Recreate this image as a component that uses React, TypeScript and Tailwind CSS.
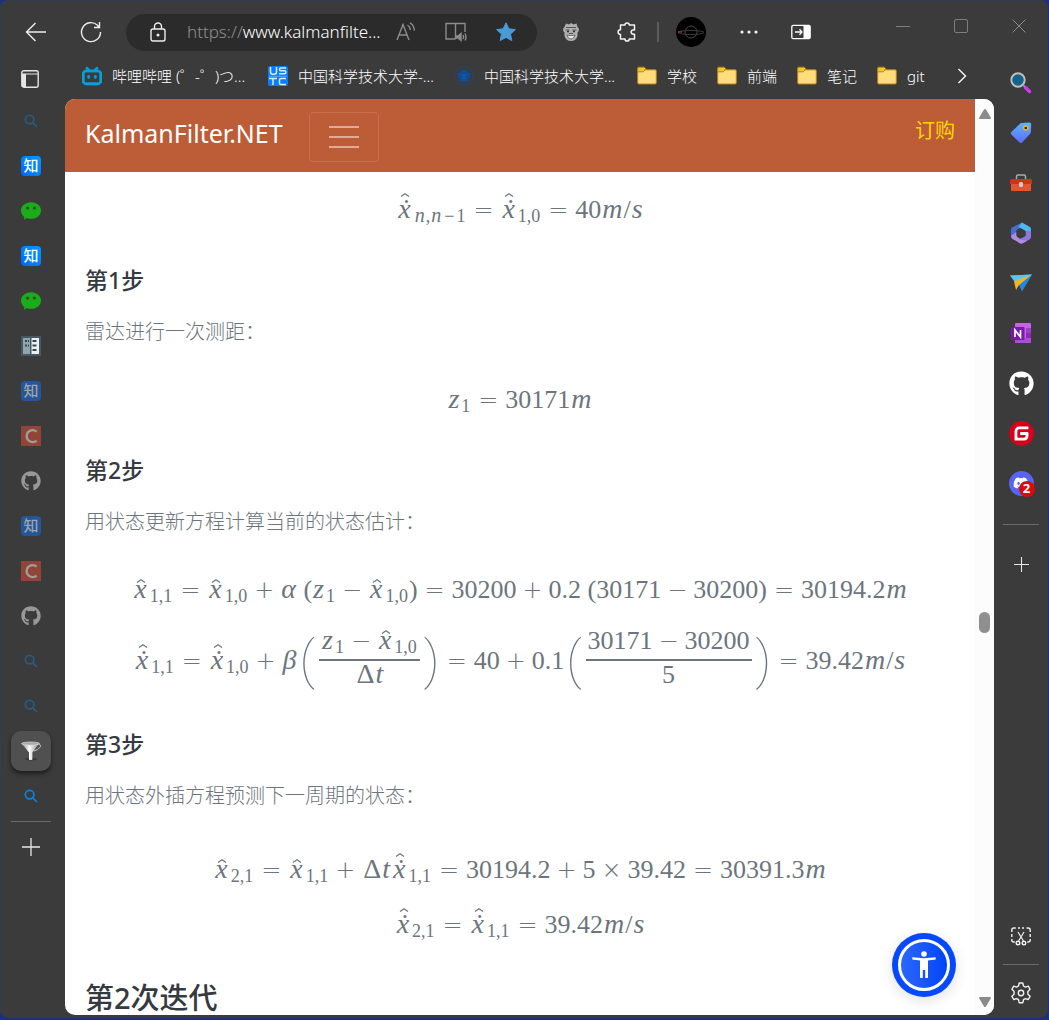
import type { ReactNode } from "react";
import { FaDiscord, FaGithub } from "react-icons/fa";
import { SiBilibili, SiGitee } from "react-icons/si";

/* ---------- Math ---------- */

const Sub = ({ children }: { children: ReactNode }) => (
  <span className="mx-px inline-block align-[-4px] text-[18px] leading-3">{children}</span>
);
const N = () => <i className="mx-px text-[20px]">n</i>;
const Rel = ({ children = "=" }: { children?: ReactNode }) => (
  <span className="mx-[7px] inline-block w-5 text-center font-['DejaVu_Sans'] text-[24px] font-extralight leading-4">{children}</span>
);
const Bin = ({ children }: { children: ReactNode }) => (
  <span className="mx-1.5 inline-block w-5 text-center font-['DejaVu_Sans'] text-[24px] font-extralight leading-4">{children}</span>
);
const It = ({ children }: { children: ReactNode }) => <i className="mx-px text-[28px] leading-4">{children}</i>;
const Hat = ({ className }: { className: string }) => (
  <svg viewBox="0 0 10 4" className={className} fill="none" stroke="currentColor" strokeWidth="1.200">
    <path d="M1 3.500 5 .8l4 2.700" />
  </svg>
);
const X = ({ dot }: { dot?: boolean }) => (
  <span className="relative mx-0.5 inline-block text-[28px] leading-4">
    <i>{dot ? "\u1e8b" : "x"}</i>
    <Hat className={dot ? "absolute -top-2 left-0.5 h-1 w-2.5" : "absolute -top-0.5 left-0.5 h-1 w-2.5"} />
  </span>
);
const Delta = () => <span className="ml-0.5 text-[28px] leading-4">Δ</span>;
const Eq = ({ children }: { children: ReactNode }) => (
  <div className="flex min-h-10 items-center justify-center whitespace-nowrap font-['Liberation_Serif',serif] text-[26px] leading-10 text-[#6c757d]">
    {children}
  </div>
);
const Open = () => <span className="mr-1 ml-0.5 font-['Roboto'] text-[52px] font-thin leading-[60px]">(</span>;
const Close = () => <span className="ml-1 font-['Roboto'] text-[52px] font-thin leading-[60px]">)</span>;
const Frac = ({ top, bottom }: { top: ReactNode; bottom: ReactNode }) => (
  <span className="flex flex-col items-center">
    <span className="h-8 border-b-2 border-[#6c757d] px-0.5 leading-6">{top}</span>
    <span className="h-8 leading-7">{bottom}</span>
  </span>
);

/* ---------- Article text ---------- */

const H3 = ({ children }: { children: ReactNode }) => (
  <h3 className="mt-9 text-[23px] font-medium leading-7 text-[#343a40]">{children}</h3>
);
const P = ({ children }: { children: ReactNode }) => (
  <p className="mt-[23px] mb-[33px] text-xl font-light leading-[30px] text-[#6c757d]">{children}</p>
);

/* ---------- Icons ---------- */

const SearchSmall = ({ dim }: { dim?: boolean }) => (
  <svg viewBox="0 0 14 14" className={dim ? "size-3.5 text-[#275b86]" : "size-3.5 text-[#0f80e0]"} fill="none" stroke="currentColor" strokeWidth="1.7">
    <circle cx="5.6" cy="5.6" r="4.3" />
    <path d="M8.8 8.8 13 13" />
  </svg>
);
const Zhihu = ({ dim }: { dim?: boolean }) => (
  <span
    className={
      dim
        ? "flex size-5 items-center justify-center rounded bg-[#24579a] text-[15px] font-medium leading-none text-[#a0a4ab]"
        : "flex size-5 items-center justify-center rounded bg-linear-to-tr from-[#0062ff] to-[#0a9bff] text-[15px] font-medium leading-none text-white"
    }
  >
    知
  </span>
);
const Wechat = () => (
  <svg viewBox="0 0 20 20" className="size-5">
    <path d="M10 1.200c5.600 0 10 3.600 10 8.300s-4.400 8.300-10 8.300c-1.700 0-3.200-.3-4.600-.9L3 19l.3-3.100C1.300 14.400 0 12.100 0 9.500 0 4.800 4.400 1.200 10 1.200Z" fill="#1aad19" />
    <circle cx="6.600" cy="7" r="1.500" fill="#2e4a2e" />
    <circle cx="13.400" cy="7" r="1.500" fill="#2e4a2e" />
  </svg>
);
const Ledger = () => (
  <svg viewBox="0 0 20 20" className="size-5">
    <path d="M0 0h20v20H0z" fill="#455a64" />
    <path d="M2 2h7v16H2z" fill="#90a4ae" />
    <path d="M10.500 2H18v16h-7.500z" fill="#eceff1" />
    <path d="M4 4h2v2H4zM4 8.500h2v2H4zM7 4h1v2H7zM7 8.500h1v2H7zM11.500 4h4v2h-4zM11.500 8.500h4v2h-4zM11.500 13h4v2h-4z" fill="#37474f" />
  </svg>
);
const CLogo = () => (
  <svg viewBox="0 0 20 20" className="size-5">
    <path d="M0 0h20v20H0z" fill="#924536" />
    <path d="M15.600 5.600A6 6 0 1 0 15.600 14.600" fill="none" stroke="#9d9d9d" strokeWidth="2.400" />
  </svg>
);
const Funnel = () => (
  <svg viewBox="0 0 20 20" className="size-5">
    <defs>
      <linearGradient id="funnel" x1="0" x2="1">
        <stop offset="0" stopColor="#777" />
        <stop offset=".45" stopColor="#fff" />
        <stop offset="1" stopColor="#888" />
      </linearGradient>
    </defs>
    <ellipse cx="10" cy="18" rx="6" ry="1.500" fill="#393939" />
    <path d="M.5 2.500 8 11.500v7q1.700 1 3.400 0v-7L18 2.500Z" fill="url(#funnel)" />
    <ellipse cx="9.500" cy="2.600" rx="9" ry="1.600" fill="#a8a8a8" stroke="#eee" strokeWidth=".6" />
    <path d="M18 3.500c3 0 2 4-5 6.500" fill="none" stroke="#ccc" />
  </svg>
);
const Plus = ({ className }: { className: string }) => (
  <svg viewBox="0 0 18 18" className={className} stroke="#e8e8e8" strokeWidth="1.300">
    <path d="M9 0v18M0 9h18" />
  </svg>
);
const Folder = () => (
  <svg viewBox="0 0 20 20" className="size-5 shrink-0" stroke="#b58413">
    <path d="M.7 3.500v13.300q0 1.200 1.200 1.200h16.200q1.200 0 1.200-1.200V5q0-1.200-1.200-1.200H8.500" fill="#ffdc7c" />
    <path d="M.7 5.200V2.200q0-1 1-1h5.600l1.400 1.500-1.600 2.500q-.5.600-1.200.6H.7Z" fill="#f7c62f" />
  </svg>
);
const Ustc = () => (
  <svg viewBox="0 0 20 20" className="size-5 shrink-0">
    <rect width="20" height="20" rx="2" fill="#0a7dfb" />
    <path d="M2.500 1v5q0 2.200 2.200 2.200h1.600q2.200 0 2.200-2.200V1M18 2h-5q-1.500 0-1.500 1.400t1.500 1.400h3.400q1.500 0 1.500 1.500T16.400 7.800H11M1 12.500h8M5 12.500V19M18 12.500h-5q-1.500 0-1.500 1.500v3q0 1.500 1.500 1.500h5" fill="none" stroke="#d7ecff" strokeWidth="1.500" />
    <path d="M1 10.300h18" stroke="#6fb8ff" strokeWidth=".8" />
  </svg>
);
const Seal = () => (
  <svg viewBox="0 0 20 20" className="size-5 shrink-0" fill="none" stroke="#0b4f9e">
    <circle cx="10" cy="10" r="9.300" strokeOpacity=".8" strokeDasharray="2.500 .6" />
    <circle cx="10" cy="10" r="5.200" fill="#0b4f9e" />
    <path d="m10 4 1.800 3.200 3.700.8-2.500 2.800.5 4-3.500-1.500-3.500 1.500.5-4L4.500 8l3.700-.8Z" fill="#0b4f9e" strokeWidth="1.500" strokeLinejoin="round" />
    <path d="M8 9h4M8.500 12h3" stroke="#2f5f9a" />
  </svg>
);

const LockIcon = () => (
  <svg viewBox="0 0 16 20" className="h-5 w-4 shrink-0" fill="none" stroke="#eee" strokeWidth="1.400">
    <rect x="1" y="7" width="14" height="12" rx="2" />
    <path d="M4.500 7V4.500a3.500 3.500 0 0 1 7 0V7" />
    <circle cx="8" cy="13" r=".8" fill="#eee" />
  </svg>
);

/* ---------- Top toolbar ---------- */

const Toolbar = () => (
  <header className="flex h-[55px] shrink-0 items-start">
    <div className="flex h-[55px] flex-1 items-center pt-[9px]">
      <button aria-label="返回" className="ml-6 flex w-6 justify-center">
        <svg viewBox="0 0 22 20" className="h-5 w-[22px]" fill="none" stroke="#eee" strokeWidth="1.400">
          <path d="M21 10H1.500M10.500 1 1.500 10l9 9" />
        </svg>
      </button>
      <button aria-label="刷新" className="ml-8 flex w-[22px] justify-center">
        <svg viewBox="0 0 22 22" className="size-[22px]" fill="none" stroke="#eee" strokeWidth="1.400">
          <path d="M20.500 11A9.500 9.500 0 1 1 17.500 4.200L19 6M19.500 1v5.500H14" />
        </svg>
      </button>
      <div className="ml-6 flex h-[37px] max-w-[411px] flex-1 items-center rounded-full bg-[#2b2b2b] pl-6">
        <LockIcon />
        <a href="https://www.kalmanfilter.net" className="ml-[21px] flex-1 font-['Noto_Sans'] text-[17px] font-light text-white">
          <span className="text-[#8f8f8f]">https://</span>www.kalmanfilte...
        </a>
        <svg viewBox="0 0 20 20" className="size-5 shrink-0" fill="none" stroke="#8c8c8c" strokeWidth="1.400">
          <path d="M1 18 7 2.500 13 18M3 13h8M11.500 3q2.500 1.500 2.800 5M14 .8q4.300 2.500 4.300 8" />
        </svg>
        <svg viewBox="0 0 22 20" className="ml-[29px] h-5 w-[22px] shrink-0" fill="none" stroke="#8c8c8c" strokeWidth="1.400">
          <path d="M10.500 17V1.500H1V17h9.500M10.500 1.500H20V10M10.500 17" />
          <path d="M11 14h2l3-2.500v7L13 16h-2z" fill="#8c8c8c" />
          <path d="M18 13q1.200 2 0 4M20 11.500q2 3.500 0 7" />
        </svg>
        <svg viewBox="0 0 20 20" className="ml-[29px] mr-[21px] size-5 shrink-0">
          <path d="m10 .8 2.800 6 6.600.8-4.900 4.500 1.300 6.500L10 15.400l-5.800 3.200 1.300-6.500L.6 7.600l6.600-.8Z" fill="#4a9ad6" stroke="#4a9ad6" strokeLinejoin="round" />
        </svg>
      </div>
      <div className="ml-6 flex items-center">
        <svg viewBox="0 0 20 20" className="size-5">
          <path d="M3.500 5 5 1.500l3 1L10 1l2.500 1.500 3-1L16.500 5q2 1 1.300 4l-1.300 1.500v3.500q-1.500 5-6.500 5t-6.500-5v-3.500L2.200 9q-.7-3 1.300-4Z" fill="#b0b0b0" />
          <path d="M5 5.500h10M4.500 8h4M11.500 8h4M8 11.500h4" stroke="#555" fill="none" />
          <path d="M6 13q4 1.500 8 0-1 4-4 4t-4-4Z" fill="#eee" stroke="#555" strokeWidth=".8" />
          <circle cx="7" cy="9.500" r="1.100" fill="#333" />
          <circle cx="13" cy="9.500" r="1.100" fill="#333" />
        </svg>
        <svg viewBox="0 0 20 20" className="ml-9 size-5" fill="none" stroke="#f2f2f2" strokeWidth="1.500" strokeLinejoin="round">
          <path d="M3.500 3H8a2.100 2.100 0 0 1 4.200 0h5.300v5h-1.200a2.100 2.100 0 0 0 0 4.200h1.200V17h-5.300a2.100 2.100 0 0 1-4.200 0H3.500v-4.500a2.300 2.300 0 0 1 0-4.800Z" />
        </svg>
        <span className="ml-5 h-5 w-0.5 bg-[#5c5c5c]" />
        <svg viewBox="0 0 30 30" className="ml-[17px] size-[30px]" fill="none">
          <circle cx="15" cy="15" r="15" fill="#000" />
          <circle cx="15" cy="15" r="6" stroke="#484848" />
          <ellipse cx="15" cy="15.500" rx="13" ry="2" stroke="#3f3a38" />
          <path d="M2 15h4" stroke="#a3483a" />
        </svg>
        <svg viewBox="0 0 18 4" className="ml-[34px] h-1 w-[18px]" fill="#f2f2f2">
          <circle cx="2" cy="2" r="1.600" />
          <circle cx="9" cy="2" r="1.600" />
          <circle cx="16" cy="2" r="1.600" />
        </svg>
        <svg viewBox="0 0 20 16" className="ml-[33px] h-4 w-5" fill="none">
          <rect x=".8" y="1.300" width="18.400" height="13.400" rx="1.500" stroke="#fff" strokeWidth="1.300" />
          <path d="M12.500 1H19v14h-6.500z" fill="#fff" />
          <path d="M4 8h7M8.500 5.200 11 8l-2.500 2.800" stroke="#fff" strokeWidth="1.300" />
        </svg>
      </div>
    </div>
    <div className="mr-[22px] flex h-[52px] items-center">
      <button aria-label="最小化" className="flex size-3.5 items-center">
        <span className="h-px w-full bg-[#7e7e7e]" />
      </button>
      <button aria-label="最大化" className="ml-11 size-3.5 rounded-xs border border-[#7e7e7e]" />
      <button aria-label="关闭" className="ml-11 size-3.5">
        <svg viewBox="0 0 14 14" stroke="#8a8a8a">
          <path d="m.5.500 13 13M13.500.5l-13 13" />
        </svg>
      </button>
    </div>
  </header>
);

/* ---------- Side bars ---------- */

const tabs: { label: string; icon: ReactNode; selected?: boolean }[] = [
  { label: "搜索", icon: <SearchSmall dim /> },
  { label: "知乎", icon: <Zhihu /> },
  { label: "微信", icon: <Wechat /> },
  { label: "知乎", icon: <Zhihu /> },
  { label: "微信", icon: <Wechat /> },
  { label: "文档", icon: <Ledger /> },
  { label: "知乎", icon: <Zhihu dim /> },
  { label: "CSDN", icon: <CLogo /> },
  { label: "GitHub", icon: <FaGithub className="size-5 text-[#989898]" /> },
  { label: "知乎", icon: <Zhihu dim /> },
  { label: "CSDN", icon: <CLogo /> },
  { label: "GitHub", icon: <FaGithub className="size-5 text-[#989898]" /> },
  { label: "搜索", icon: <SearchSmall dim /> },
  { label: "搜索", icon: <SearchSmall dim /> },
  { label: "KalmanFilter.NET", icon: <Funnel />, selected: true },
  { label: "搜索", icon: <SearchSmall /> },
];

const TabRail = () => (
  <nav className="flex w-[65px] shrink-0 flex-col items-center pr-[3px]">
    <button aria-label="标签页" className="flex h-[43px] shrink-0 items-center pr-0.5 pt-1">
      <svg viewBox="0 0 18 18" className="size-[18px]" fill="none" stroke="#e5e5e5" strokeWidth="1.400">
        <rect x=".8" y=".8" width="16.400" height="16.400" rx="2" />
        <path d="M1 4h16" strokeWidth="1.200" />
        <path d="M1 4h4v13H1z" fill="#e5e5e5" stroke="none" />
      </svg>
    </button>
    {tabs.map((t, i) => (
      <div key={i} className="flex h-[45px] shrink-0 items-center">
        <button
          aria-label={t.label}
          className={
            t.selected
              ? "flex size-10 items-center justify-center rounded-[10px] bg-[#505050] shadow-[0_3px_4px_rgba(0,0,0,0.5)]"
              : "flex size-10 items-center justify-center"
          }
        >
          {t.icon}
        </button>
      </div>
    ))}
    <hr className="mt-[3px] w-10 border-[#6a6a6a]" />
    <button aria-label="新建标签页" className="mt-4">
      <Plus className="size-[18px]" />
    </button>
  </nav>
);

const apps: { label: string; icon: ReactNode }[] = [
  {
    label: "搜索",
    icon: (
      <svg viewBox="0 0 22 22" className="size-[22px]">
        <path d="m13.500 13.500 2 2" stroke="#999" strokeWidth="2" />
        <path d="m16 16 3.500 3.500" stroke="#c83bf0" strokeWidth="3.600" strokeLinecap="round" />
        <circle cx="8" cy="8" r="6.700" fill="#15628a" stroke="#bdbdbd" strokeWidth="2" />
      </svg>
    ),
  },
  {
    label: "购物",
    icon: (
      <svg viewBox="0 0 22 22" className="size-[22px]">
        <defs>
          <linearGradient id="tag" x2="0" y2="1">
            <stop stopColor="#5fb4ff" />
            <stop offset="1" stopColor="#5b6cf6" />
          </linearGradient>
        </defs>
        <path d="M12 1 19.500.5q1.700 0 1.700 1.700l-.3 7.800q0 1-.8 1.800l-8 8.700q-1.200 1-2.400 0l-8.400-8q-1-1.200 0-2.400L9.800 2q.8-.9 2.200-1Z" fill="url(#tag)" />
        <circle cx="15.800" cy="6" r="2" fill="#224" stroke="#f3bb16" strokeWidth="1.400" />
      </svg>
    ),
  },
  {
    label: "工具",
    icon: (
      <svg viewBox="0 0 24 20" className="h-5 w-6">
        <path d="M7.500 6V3.500Q7.500 2 9 2h6q1.500 0 1.500 1.500V6" fill="none" stroke="#aaa" strokeWidth="1.500" />
        <path d="M2 10h20v7q0 1-1 1H3q-1 0-1-1Z" fill="#e8542b" />
        <path d="M1 7.500Q1 6 2.500 6h19Q23 6 23 7.500V11H1Z" fill="#c9390f" />
        <rect x="10" y="9" width="4" height="5" rx="1.500" fill="#ccc" />
      </svg>
    ),
  },
  {
    label: "Microsoft 365",
    icon: (
      <svg viewBox="0 0 22 22" className="size-[22px]">
        <path d="M12 .5 2.500 5.200Q1 6 1 7.500v8.200l5.500-1.500V8.500Q7 7 12 5Z" fill="#4b6cd0" />
        <path d="m12 .5 7.500 4.200Q21 5.500 21 7.500V13l-5.500-2.500V9L8.500 5Z" fill="#4fb8ee" />
        <path d="M21 8.500v6.500q0 1.500-1.500 2.400L13 21.200q-1.500.8-3 .2l-3-3 8.500-4.500V9Z" fill="#8b78dd" />
        <path d="M1 14q.2 2 1.500 2.900L9.500 21q2 1 4-.2l3.500-2-6-1-4.500-3.600V10Z" fill="#b48ae0" />
        <path d="m11 6.500 4.500 2.500v4.500L11 16l-4.500-2.500V9Z" fill="#3b3b3b" />
      </svg>
    ),
  },
  {
    label: "Drop",
    icon: (
      <svg viewBox="0 0 22 18" className="h-[18px] w-[22px]">
        <path d="M0 1.500 22 .5 12 17l-3-7Z" fill="#43b0f4" />
        <path d="M22 .5 12 17l-3-6Z" fill="#1f86e8" />
        <path d="m22 .5-16 9L0 1.500Z" fill="#58c6f7" />
        <path d="m4 7.500 17-6.500L9 11l-3 5Z" fill="#f7b519" />
      </svg>
    ),
  },
  {
    label: "OneNote",
    icon: (
      <svg viewBox="0 0 20 20" className="size-5">
        <rect x="4" width="16" height="20" rx="1" fill="#c661e8" />
        <path d="M15 5h5v5h-5z" fill="#9b3fc6" />
        <path d="M15 10h5v5h-5z" fill="#8a2bb5" />
        <path d="M4 15h16v4q0 1-1 1H5q-1 0-1-1Z" fill="#ae4bd5" />
        <rect y="4" width="13.500" height="13" rx="1" fill="#7719aa" />
        <path d="M4 14V7l5.500 7V7" fill="none" stroke="#fff" strokeWidth="1.700" />
      </svg>
    ),
  },
  { label: "GitHub", icon: <FaGithub className="size-[25px] text-white" /> },
  {
    label: "Gitee",
    icon: (
      <span className="rounded-full bg-[radial-gradient(circle,white_60%,transparent_62%)]">
        <SiGitee className="size-[25px] text-[#d9001b]" />
      </span>
    ),
  },
  {
    label: "Discord",
    icon: (
      <span className="relative flex size-[25px] items-center justify-center rounded-full bg-[#5865f2] text-white">
        <FaDiscord className="size-4" />
        <span className="absolute -right-px -bottom-px flex size-4 items-center justify-center rounded-full bg-[#d90b0b] font-['Noto_Sans'] text-[13px] font-bold leading-none">
          2
        </span>
      </span>
    ),
  },
];

const AppRail = () => (
  <aside className="flex w-[54px] shrink-0 flex-col items-center pt-[3px]">
    {apps.map((a) => (
      <button key={a.label} aria-label={a.label} className="flex h-[50px] shrink-0 items-center justify-center">
        {a.icon}
      </button>
    ))}
    <hr className="mt-4 w-9 border-[#6a6a6a]" />
    <button aria-label="自定义" className="mt-8">
      <Plus className="size-[15px]" />
    </button>
    <button aria-label="截图" className="mt-auto">
      <svg viewBox="0 0 20 19" className="h-[19px] w-5" fill="none" stroke="#f0f0f0" strokeWidth="1.400">
        <path d="M.8 5V3q0-2 2-2h2M7 1h2M11 1h2M15.500 1h1.700q2 0 2 2v2M.8 7v3M19.200 7v3M.8 12v1q0 2 2 2h1M19.200 12v1q0 2-2 2h-1" />
        <path d="m7 5 5.500 9M13 5l-5.500 9" strokeWidth="1.200" />
        <circle cx="7" cy="16" r="1.800" />
        <circle cx="13" cy="16" r="1.800" />
      </svg>
    </button>
    <hr className="mt-[18px] w-9 border-[#6a6a6a]" />
    <button aria-label="设置" className="mt-[17px] mb-3.5">
      <svg viewBox="0 0 22 22" className="size-[22px]" fill="none" stroke="#f0f0f0" strokeWidth="1.400" strokeLinejoin="round">
        <circle cx="11" cy="11" r="2.700" />
        <path d="M9.200 1h3.600l.7 3 1.900 1.100 2.900-.9 1.800 3.100-2.200 2.100v2.900l2.200 2-1.800 3.200-2.900-.9-1.900 1.100-.7 3H9.200l-.7-3-1.900-1.100-2.900.9-1.800-3.200 2.200-2V9.400L1.900 7.300l1.800-3.100 2.900.9L8.500 4Z" />
      </svg>
    </button>
  </aside>
);

/* ---------- Bookmarks ---------- */

const Bookmark = ({ icon, children }: { icon: ReactNode; children: ReactNode }) => (
  <a href="#" className="flex shrink-0 items-center gap-2.5">
    {icon}
    {children}
  </a>
);

const Bookmarks = () => (
  <nav className="flex h-11 shrink-0 items-center gap-5 overflow-hidden pb-0.5 pl-[17px] font-['Noto_Sans','Noto_Sans_CJK_SC',sans-serif] text-[15px] font-light text-white">
    <Bookmark icon={<SiBilibili className="size-5 shrink-0 stroke-[#0a9fd8] stroke-1 text-[#0a9fd8]" />}>
      <span className="w-[136px] whitespace-nowrap">哔哩哔哩 (゜-゜)つ...</span>
    </Bookmark>
    <Bookmark icon={<Ustc />}>
      <span className="w-[136px] whitespace-nowrap">中国科学技术大学-...</span>
    </Bookmark>
    <Bookmark icon={<Seal />}>
      <span className="w-[133px] whitespace-nowrap">中国科学技术大学...</span>
    </Bookmark>
    <Bookmark icon={<Folder />}>学校</Bookmark>
    <Bookmark icon={<Folder />}>前端</Bookmark>
    <Bookmark icon={<Folder />}>笔记</Bookmark>
    <Bookmark icon={<Folder />}>git</Bookmark>
    <button aria-label="更多收藏" className="ml-3">
      <svg viewBox="0 0 10 16" className="h-4 w-2.5" fill="none" stroke="#f0f0f0" strokeWidth="1.500">
        <path d="m1.500 1 7 7-7 7" />
      </svg>
    </button>
  </nav>
);

/* ---------- Page ---------- */

const Article = () => (
  <main className="px-5 pt-[18px]">
    <Eq>
      <span>
        <X dot /><Sub><N />,<N /><span className="mx-0.5">−</span>1</Sub><Rel /><X dot /><Sub>1,0</Sub><Rel />40<It>m</It>/<It>s</It>
      </span>
    </Eq>
    <H3>第1步</H3>
    <P>雷达进行一次测距：</P>
    <Eq>
      <span>
        <It>z</It><Sub>1</Sub><Rel />30171<It>m</It>
      </span>
    </Eq>
    <H3>第2步</H3>
    <P>用状态更新方程计算当前的状态估计：</P>
    <Eq>
      <span>
        <X /><Sub>1,1</Sub><Rel /><X /><Sub>1,0</Sub><Bin>+</Bin><It>α</It> (<It>z</It><Sub>1</Sub><Bin>−</Bin><X /><Sub>1,0</Sub>)<Rel />30200<Bin>+</Bin>0.2 (30171<Bin>−</Bin>30200)<Rel />30194.2<It>m</It>
      </span>
    </Eq>
    <div className="mt-[19px] pb-px">
      <Eq>
        <span>
          <X dot /><Sub>1,1</Sub><Rel /><X dot /><Sub>1,0</Sub><Bin>+</Bin><It>β</It>
        </span>
        <Open />
        <Frac
          top={<><It>z</It><Sub>1</Sub><Bin>−</Bin><X /><Sub>1,0</Sub></>}
          bottom={<><Delta /><It>t</It></>}
        />
        <Close />
        <span>
          <Rel />40<Bin>+</Bin>0.1
        </span>
        <Open />
        <Frac top={<>30171<Bin>−</Bin>30200</>} bottom="5" />
        <Close />
        <span>
          <Rel />39.42<It>m</It>/<It>s</It>
        </span>
      </Eq>
    </div>
    <H3>第3步</H3>
    <P>用状态外插方程预测下一周期的状态：</P>
    <div className="mt-[39px] flex flex-col gap-[15px]">
      <Eq>
        <span>
          <X /><Sub>2,1</Sub><Rel /><X /><Sub>1,1</Sub><Bin>+</Bin><Delta /><It>t</It><X dot /><Sub>1,1</Sub><Rel />30194.2<Bin>+</Bin>5<Bin>×</Bin>39.42<Rel />30391.3<It>m</It>
        </span>
      </Eq>
      <Eq>
        <span>
          <X dot /><Sub>2,1</Sub><Rel /><X dot /><Sub>1,1</Sub><Rel />39.42<It>m</It>/<It>s</It>
        </span>
      </Eq>
    </div>
    <h2 className="mt-[33px] text-[29px] font-medium leading-10 text-[#343a40]">第2次迭代</h2>
  </main>
);

export default function App() {
  return (
    <div className="h-screen bg-[#1c2f86] pr-px pb-0.5 font-['Noto_Sans','Noto_Sans_CJK_SC',sans-serif]">
      <div className="flex h-full flex-col overflow-hidden rounded-lg bg-[#3b3b3b] shadow-[inset_1px_1px_0_#333d50]">
        <Toolbar />
        <div className="flex min-h-0 flex-1">
          <TabRail />
          <div className="flex min-w-0 flex-1 flex-col pb-[3px]">
            <Bookmarks />
            <div className="relative flex min-h-0 flex-1 overflow-hidden rounded-[10px] bg-white">
              <div className="min-w-0 flex-1 overflow-hidden">
                <div className="flex h-[73px] bg-[#bc5d37] px-5">
                  <a href="#" className="mt-4 font-['Noto_Sans'] text-[25px] leading-9 text-white">KalmanFilter.NET</a>
                  <button aria-label="菜单" className="ml-[26px] mt-[13px] flex h-[50px] w-[70px] flex-col items-center justify-center gap-2 rounded border border-[#c86f4c]">
                    <span className="h-0.5 w-[30px] bg-[#dfab97]" />
                    <span className="h-0.5 w-[30px] bg-[#dfab97]" />
                    <span className="h-0.5 w-[30px] bg-[#dfab97]" />
                  </button>
                  <a href="#" className="ml-auto mt-[17px] text-xl leading-[30px] text-[#ffd700]">订购</a>
                </div>
                <Article />
              </div>
              <div className="flex w-[19px] shrink-0 flex-col items-center bg-[#fcfcfc] pt-2.5 pb-2">
                <svg viewBox="0 0 12 10" className="h-2.5 w-3" fill="#8a8a8a"><path d="M6 0q.7 0 1 .5L12 9q0 1-1 1H1Q0 10 0 9L5 .5Q5.300 0 6 0Z" /></svg>
                <span className="mt-[493px] h-[21px] w-[11px] rounded-full bg-[#8f8f8f]" />
                <svg viewBox="0 0 12 10" className="mt-auto h-2.5 w-3" fill="#8a8a8a"><path d="M6 10q.7 0 1-.5L12 1q0-1-1-1H1Q0 0 0 1l5 8.500q.3.500 1 .5Z" /></svg>
              </div>
              <button aria-label="无障碍" className="absolute right-[38px] bottom-[18px] flex size-16 items-center justify-center rounded-full bg-[#0648fb] shadow-[0_4px_14px_rgba(0,0,0,0.12)]">
                <span className="flex size-[52px] items-center justify-center rounded-full border-[3px] border-white bg-linear-to-r from-[#2b66ff] to-[#0044f5]">
                  <svg viewBox="0 0 24 28" className="h-7 w-6" fill="#fff">
                    <circle cx="12" cy="3" r="2.800" />
                    <path d="M.3 6.200 12 7.300l11.700-1.100v2.200L16 9.600V27h-2.800v-8h-2.400v8H8V9.600L.3 8.400Z" />
                  </svg>
                </span>
              </button>
            </div>
          </div>
          <AppRail />
        </div>
      </div>
    </div>
  );
}
